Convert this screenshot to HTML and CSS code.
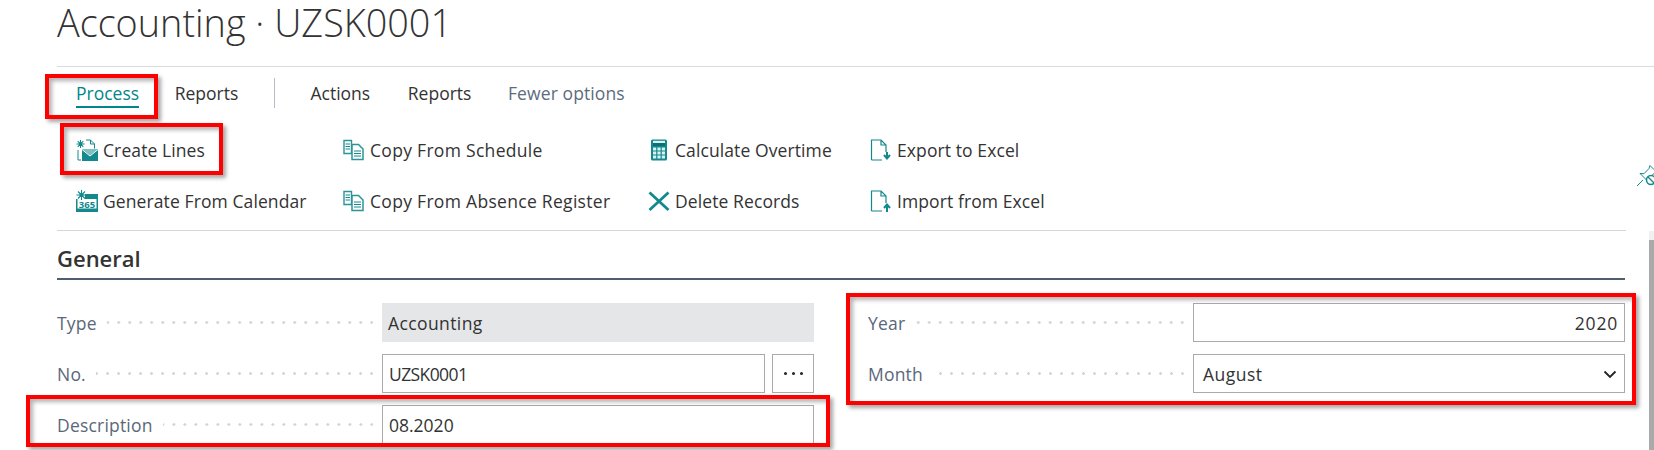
FILE: index.html
```html
<!DOCTYPE html>
<html>
<head>
    <title>Accounting - UZSK0001</title>
    <link rel="stylesheet" href="styles.css">
</head>
<body>
    <div class="page">
        <h1 class="title">Accounting · UZSK0001</h1>

        <nav class="tabs">
            <a class="tab tab-active">Process</a>
            <a class="tab">Reports</a>
            <span class="tab-sep"></span>
            <a class="tab">Actions</a>
            <a class="tab tab-reports">Reports</a>
            <a class="tab tab-muted">Fewer options</a>
        </nav>

        <div class="actions">
            <div class="action-grid">
                <a class="action">
                    <svg class="icon" viewBox="0 0 22 22">
                        <path d="M4.500 1v8M.5 5h8M1.700 2.200l5.600 5.600M7.300 2.200L1.700 7.800" stroke="#13898e" stroke-width="1.100"/>
                        <circle cx="4.500" cy="5" r="1.800" fill="#13898e"/>
                        <path d="M10 1h4.500l4 4v4.500M14.500 1v4h4M2 11v10h3" fill="none" stroke="#13898e"/>
                        <path d="M6 10h16v12H6z" fill="#13898e"/>
                        <path d="M6 10h16l-8 6.500z" fill="#7fc0c2"/>
                        <path d="M6 10.500l8 6.500 8-6.500" fill="none" stroke="#fff"/>
                    </svg>
                    Create Lines
                </a>
                <a class="action action-wide">
                    <svg class="icon" viewBox="0 0 22 22"><use href="#copy-doc"/></svg>
                    Copy From Schedule
                </a>
                <a class="action">
                    <svg class="icon" viewBox="0 0 22 22"><use href="#calc"/></svg>
                    Calculate Overtime
                </a>
                <a class="action">
                    <svg class="icon" viewBox="0 0 22 22"><path d="M1.500 21V1h9.500l5 5v7M11 1v5h5M1.500 21H12" fill="none" stroke="#13898e" stroke-width="1.200"/><path d="M17 13v6M14 16l3 3.500 3-3.500" fill="none" stroke="#13898e" stroke-width="2"/></svg>
                    Export to Excel
                </a>
                <a class="action">
                    <svg class="icon" viewBox="0 0 22 22">
                        <path d="M0 4h22v18H0z" fill="#13898e"/>
                        <path d="M1.500 9h19v9.500h-19z" fill="#fff"/>
                        <text class="icon-num" x="11" y="17.500" text-anchor="middle">365</text>
                        <path d="M0 4h9v5H0z" fill="#fff"/>
                        <path d="M5.500 0v10M.5 5h10M2 1.500l7 7M9 1.500l-7 7" stroke="#13898e" stroke-width="1.100"/>
                        <circle cx="5.500" cy="5" r="2" fill="#13898e"/>
                    </svg>
                    Generate From Calendar
                </a>
                <a class="action action-wide">
                    <svg class="icon" viewBox="0 0 22 22"><use href="#copy-doc"/></svg>
                    Copy From Absence Register
                </a>
                <a class="action">
                    <svg class="icon" viewBox="0 0 22 22"><path d="M1.500 2.500l19 17.500M20.500 2.500L1.500 20" fill="none" stroke="#13898e" stroke-width="2.800"/></svg>
                    Delete Records
                </a>
                <a class="action">
                    <svg class="icon" viewBox="0 0 22 22"><path d="M1.500 21V1h9.500l5 5v7M11 1v5h5M1.500 21H12" fill="none" stroke="#13898e" stroke-width="1.200"/><path d="M17 22v-7M14 18l3-3.500 3 3.500" fill="none" stroke="#13898e" stroke-width="2"/></svg>
                    Import from Excel
                </a>
            </div>
            <svg class="pin" viewBox="0 0 22 22"><path d="M1 21l6-6M4 8.500l4 .2 5-5.200 1-3 7 7-3 1-5.200 5 .2 4z" fill="none" stroke="#13898e" stroke-width="1"/><circle cx="15" cy="15" r="4.500" fill="#fff" stroke="#13898e" stroke-width="1.500"/><path d="M12 12l6 6" stroke="#13898e" stroke-width="1.300"/></svg>
        </div>

        <section class="general">
            <h2 class="section-title">General</h2>
            <div class="form-cols">
                <div class="form-col">
                    <div class="row">
                        <label class="label">Type</label><span class="dots"></span>
                        <div class="value value-readonly">Accounting</div>
                    </div>
                    <div class="row">
                        <label class="label">No.</label><span class="dots"></span>
                        <div class="value-group">
                            <input class="value value-input value-code" type="text" value="UZSK0001">
                            <button class="more" type="button"><i></i><i></i><i></i></button>
                        </div>
                    </div>
                    <div class="row">
                        <label class="label">Description</label><span class="dots"></span>
                        <input class="value value-input" type="text" value="08.2020">
                    </div>
                </div>
                <div class="form-col">
                    <div class="row">
                        <label class="label">Year</label><span class="dots"></span>
                        <input class="value value-input value-year" type="text" value="2020">
                    </div>
                    <div class="row">
                        <label class="label">Month</label><span class="dots"></span>
                        <div class="value value-input value-select">
                            August
                            <svg class="chevron" viewBox="0 0 14 9"><path d="M1.500 1.500L7 7l5.500-5.500" fill="none" stroke="#222" stroke-width="1.800"/></svg>
                        </div>
                    </div>
                </div>
            </div>
        </section>
    </div>

    <div class="scrollbar"><div class="scroll-thumb"></div></div>

    <div class="mark mark-process"></div>
    <div class="mark mark-create"></div>
    <div class="mark mark-desc"></div>
    <div class="mark mark-period"></div>

    <svg width="0" height="0" class="defs">
        <symbol id="copy-doc" viewBox="0 0 22 22">
            <path d="M1 1.500h7.500v13H1z" fill="#fff" stroke="#2a9499" stroke-width="1.400"/>
            <path d="M2.500 5h4.500M2.500 7.500h4.500M2.500 10h4.500" stroke="#13898e"/>
            <path d="M9 5.500h6.500l4.500 4.500V20.500H9z" fill="#fff" stroke="#2a9499" stroke-width="1.500"/>
            <path d="M11 12h7M11 14.500h7M11 17h7" stroke="#13898e"/>
        </symbol>
        <symbol id="calc" viewBox="0 0 22 22">
            <rect x="3" y=".5" width="16" height="21" rx="1.500" fill="#13898e"/>
            <path d="M5 4h12v3H5z" fill="#0c6f73"/>
            <path d="M5 1.800h12V4H5z" fill="#dceff0"/>
            <path d="M5 8.500h3.200v3H5zM9.400 8.500h3.200v3H9.400zM13.800 8.500H17v3h-3.200zM5 12.500h3.200v3H5zM9.400 12.500h3.200v3H9.400zM13.800 12.500H17v3h-3.200zM5 16.500h3.200v3H5zM9.400 16.500h3.200v3H9.400zM13.800 16.500H17v3h-3.200z" fill="#dceff0"/>
        </symbol>
    </svg>
</body>
</html>
```

FILE: styles.css
```css
html, body {
    margin: 0;
    padding: 0;
    height: 100%;
    overflow: hidden;
    background: #fff;
}
body {
    font-family: "Open Sans", "Noto Sans", Arial, sans-serif;
    font-size: 17.5px;
    color: #333;
}
.page {
    padding-left: 57px;
    height: 450px;
    box-sizing: border-box;
}
.defs {
    position: absolute;
}

.title {
    margin: 0;
    height: 67px;
    box-sizing: border-box;
    font-weight: 300;
    font-size: 37.800px;
    line-height: 46px;
    color: #333;
    border-bottom: 1px solid #d9d9e2;
}

.tabs {
    display: flex;
    align-items: center;
    height: 30px;
    padding-left: 19px;
    gap: 35.600px;
    margin-top: 11px;
}
.tab {
    line-height: 31px;
    height: 30px;
    box-sizing: border-box;
    color: #333;
}
.tab-active {
    color: #00868b;
    border-bottom: 2px solid #00868b;
}
.tab-reports {
    margin-left: 2px;
}
.tab-muted {
    color: #5d6b7e;
    letter-spacing: 0.1px;
    margin-left: 1px;
}
.tab-sep {
    width: 1px;
    height: 30px;
    background: #b6bcc4;
}

.actions {
    display: flex;
    align-items: center;
    height: 123px;
    padding: 16px 0 4px 19px;
    box-sizing: border-box;
    border-bottom: 1px solid #d5d5da;
    margin-right: 28px;
}
.action-grid {
    display: grid;
    grid-template-columns: 267px 305px 222px auto;
    grid-auto-rows: 51px;
    flex: 1;
}
.action {
    display: flex;
    align-items: center;
    gap: 5px;
    color: #333;
    letter-spacing: 0.1px;
}
.action-wide {
    letter-spacing: 0.3px;
}
.icon {
    width: 22px;
    height: 22px;
    flex: none;
}
.icon-num {
    font-size: 9.500px;
    font-weight: 700;
    fill: #13898e;
}
.pin {
    width: 22px;
    height: 22px;
    flex: none;
    margin-right: -32px;
    margin-top: 2px;
}

.section-title {
    margin: 0;
    height: 49px;
    line-height: 55px;
    box-sizing: border-box;
    font-size: 22px;
    font-weight: 600;
    color: #333;
    border-bottom: 2px solid #505c70;
    margin-right: 29px;
}
.form-cols {
    display: grid;
    grid-template-columns: 757px 757px;
    column-gap: 54px;
    padding-top: 23px;
}
.form-col {
    display: flex;
    flex-direction: column;
    gap: 12px;
}
.row {
    display: flex;
    align-items: center;
    height: 39px;
}
.label {
    color: #5a6779;
    flex: none;
    padding-top: 1px;
    letter-spacing: 0.2px;
}
.dots {
    flex: 1;
    height: 3px;
    margin: 0 9px 0 10px;
    background: radial-gradient(circle at 9.500px 1.500px, #d2d2d2 1.200px, transparent 1.500px) right center / 11px 3px repeat-x;
}
.value {
    width: 432px;
    height: 39px;
    flex: none;
    box-sizing: border-box;
    padding: 1px 6px 0;
    font: inherit;
    color: #333;
    display: flex;
    align-items: center;
}
.value-readonly {
    background: #e5e6e8;
    letter-spacing: 0.4px;
}
.value-input {
    border: 1px solid #aaa;
    background: #fff;
    border-radius: 0;
    outline: none;
}
.value-code {
    letter-spacing: -0.6px;
}
.value-year {
    text-align: right;
    letter-spacing: 0.8px;
}
.value-select {
    justify-content: space-between;
    padding-left: 9px;
    letter-spacing: 0.5px;
}
.chevron {
    width: 14px;
    height: 9px;
    margin-right: 1px;
}
.value-group {
    display: flex;
    gap: 7px;
    width: 432px;
    flex: none;
}
.value-group .value {
    width: 383px;
}
.more {
    width: 42px;
    height: 39px;
    border: 1px solid #aaa;
    background: #fff;
    padding: 0;
    display: flex;
    align-items: center;
    justify-content: center;
    gap: 5px;
}
.more i {
    width: 3px;
    height: 3px;
    border-radius: 50%;
    background: #222;
}

.scrollbar {
    position: absolute;
    left: 1649px;
    top: 231px;
    width: 5px;
    height: 219px;
    background: #f0f0f0;
}
.scroll-thumb {
    margin-top: 9px;
    height: 210px;
    background: #aaa;
}

.mark {
    position: absolute;
    box-sizing: border-box;
    border: 4px solid #ff0000;
    box-shadow: 3px 3px 4px rgba(0, 0, 0, 0.35), inset 3px 3px 4px rgba(0, 0, 0, 0.3);
}
.mark-process {
    left: 45px;
    top: 74px;
    width: 113px;
    height: 45px;
}
.mark-create {
    left: 60px;
    top: 123px;
    width: 163px;
    height: 52px;
}
.mark-desc {
    left: 26px;
    top: 395px;
    width: 804px;
    height: 52px;
}
.mark-period {
    left: 846px;
    top: 293px;
    width: 790px;
    height: 112px;
}
```
